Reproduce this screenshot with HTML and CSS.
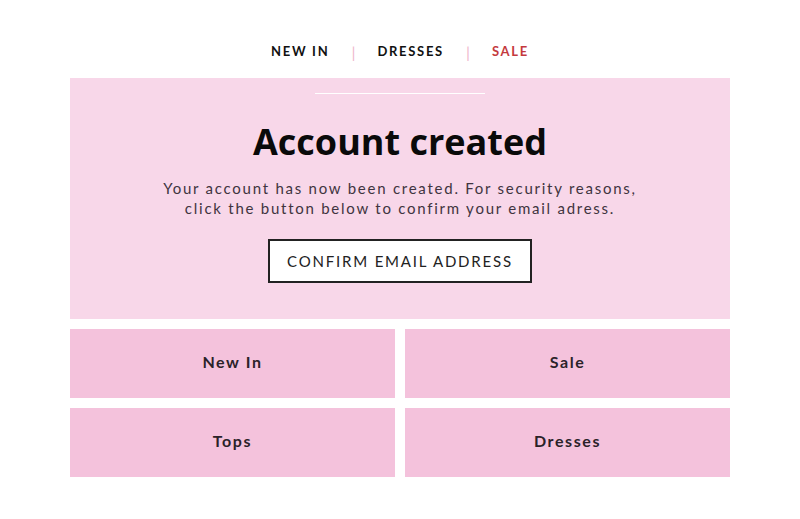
FILE: index.html
```html
<!DOCTYPE html>
<html lang="en">
<head>
    <meta charset="UTF-8">
    <meta name="viewport" content="width=device-width, initial-scale=1.0">
    <title>Account created</title>
    <link rel="stylesheet" href="styles.css">
</head>
<body>

    <div class="page">
        <nav class="nav">
            <a href="#" class="nav-link">NEW IN</a>
            <span class="sep">|</span>
            <a href="#" class="nav-link">DRESSES</a>
            <span class="sep">|</span>
            <a href="#" class="nav-link sale">SALE</a>
        </nav>

        <div class="hero">
            <div class="rule"></div>
            <h1>Account created</h1>
            <p>Your account has now been created. For security reasons,<br>click the button below to confirm your email adress.</p>
            <a href="#" class="btn">CONFIRM EMAIL ADDRESS</a>
        </div>

        <div class="tiles">
            <a href="#" class="tile">New In</a>
            <a href="#" class="tile">Sale</a>
            <a href="#" class="tile">Tops</a>
            <a href="#" class="tile">Dresses</a>
        </div>
    </div>

</body>
</html>
```

FILE: styles.css
```css
body {
    margin: 0;
    font-family: Lato, "Liberation Sans", sans-serif;
    background: #fff;
    color: #2b2229;
}
a {
    text-decoration: none;
}
.page {
    width: 660px;
    margin: 0 auto;
    padding-top: 40px;
}
.nav {
    display: flex;
    justify-content: center;
    align-items: center;
    gap: 22px;
    height: 22px;
    margin-bottom: 16px;
}
.nav-link {
    font-size: 13px;
    font-weight: 700;
    letter-spacing: 1.7px;
    color: #111;
}
.nav-link.sale {
    color: #c4393d;
}
.sep {
    color: #efb8cd;
    font-size: 16px;
}
.hero {
    background: #f8d7e9;
    text-align: center;
    padding: 15px 0 36px;
}
.rule {
    width: 170px;
    height: 1px;
    background: #fff;
    margin: 0 auto;
}
h1 {
    font-family: "Open Sans", sans-serif;
    font-size: 36px;
    font-weight: 700;
    color: #0a0a0a;
    margin: 26px 0 14px;
    line-height: 44px;
}
.hero p {
    font-size: 15px;
    letter-spacing: 1.75px;
    line-height: 20px;
    color: #403440;
    margin: 0 0 21px;
}
.btn {
    display: inline-block;
    vertical-align: top;
    width: 264px;
    box-sizing: border-box;
    height: 44px;
    line-height: 40px;
    border: 2px solid #222;
    background: #fff;
    color: #222;
    font-size: 15px;
    letter-spacing: 1.8px;
}
.tiles {
    display: grid;
    grid-template-columns: 1fr 1fr;
    gap: 10px;
    margin-top: 10px;
}
.tile {
    background: #f4c2dc;
    height: 69px;
    box-sizing: border-box;
    padding-bottom: 5px;
    display: flex;
    align-items: center;
    justify-content: center;
    font-size: 16px;
    font-weight: 700;
    letter-spacing: 1.6px;
    color: #2b2229;
}
```
